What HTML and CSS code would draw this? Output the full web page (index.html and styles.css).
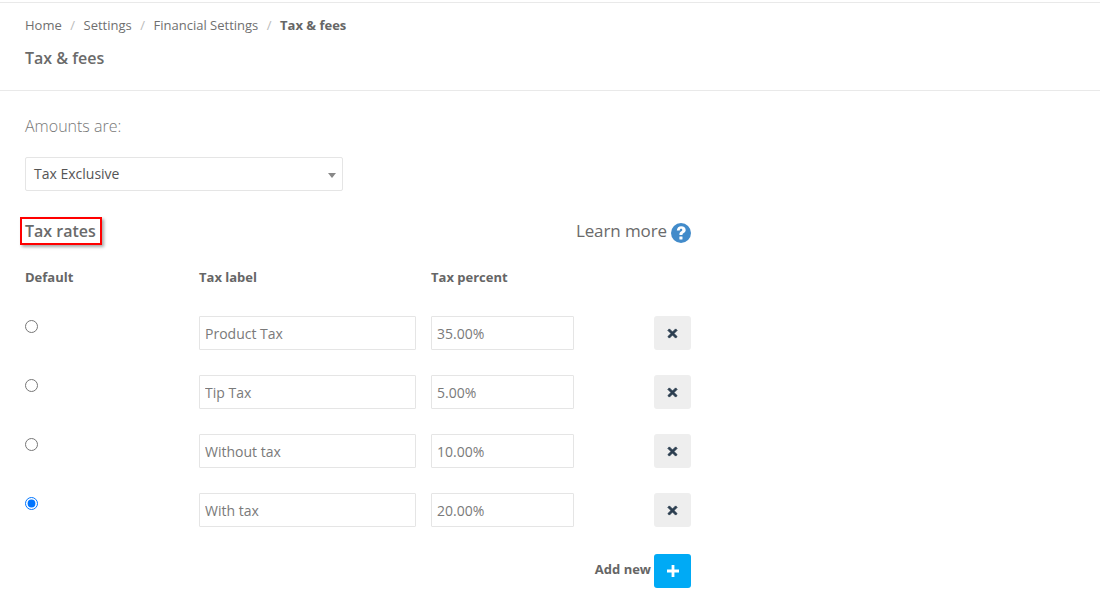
FILE: index.html
```html
<!DOCTYPE html>
<html lang="en">
<head>
<meta charset="utf-8">
<title>Tax &amp; fees</title>
<link rel="stylesheet" href="styles.css">
</head>
<body>
<header class="page-header">
  <nav class="crumbs">
    <a>Home</a><span class="sep">/</span><a>Settings</a><span class="sep">/</span><a>Financial Settings</a><span class="sep">/</span><strong>Tax &amp; fees</strong>
  </nav>
  <h1 class="page-title">Tax &amp; fees</h1>
</header>
<main class="content">
  <p class="amounts-label">Amounts are:</p>
  <div class="select-box">
    <span class="select-text">Tax Exclusive</span>
    <i class="caret"></i>
  </div>
  <div class="rates-head">
    <h2 class="rates-title">Tax rates</h2>
    <a class="learn"><span class="learn-text">Learn more</span>
      <svg class="help" viewBox="0 0 20 20" width="20" height="20" aria-hidden="true"><circle cx="10" cy="10" r="10" fill="#428bca"/><path d="M5.800 7.500C6 4.800 7.800 3.300 10.300 3.300c2.600 0 4.400 1.500 4.400 3.600 0 1.500-.8 2.400-2 3.200-.9.600-1.200.9-1.200 1.600v.4H8.400v-.7c0-1.400.5-2.200 1.600-3 .9-.6 1.300-1 1.300-1.500 0-.7-.5-1.100-1.200-1.100-.8 0-1.300.5-1.400 1.700z" fill="#fff"/><rect x="8.400" y="13.400" width="3.100" height="3" rx=".3" fill="#fff"/></svg>
    </a>
  </div>
  <div class="rates">
    <div class="th first">Default</div><div class="th">Tax label</div><div class="th">Tax percent</div><div class="th"></div>

    <div class="cell-radio"><input type="radio" name="def"></div>
    <input class="field" type="text" value="Product Tax">
    <input class="field" type="text" value="35.00%">
    <button class="btn del"><svg viewBox="0 0 12 12" width="11" height="11"><path d="M2.600 1 6 4.400 9.400 1 11 2.600 7.600 6 11 9.400 9.400 11 6 7.600 2.600 11 1 9.400 4.400 6 1 2.600z" fill="#2c3e50" stroke="#2c3e50" stroke-width="1" stroke-linejoin="round"/></svg></button>

    <div class="cell-radio"><input type="radio" name="def"></div>
    <input class="field" type="text" value="Tip Tax">
    <input class="field" type="text" value="5.00%">
    <button class="btn del"><svg viewBox="0 0 12 12" width="11" height="11"><path d="M2.600 1 6 4.400 9.400 1 11 2.600 7.600 6 11 9.400 9.400 11 6 7.600 2.600 11 1 9.400 4.400 6 1 2.600z" fill="#2c3e50" stroke="#2c3e50" stroke-width="1" stroke-linejoin="round"/></svg></button>

    <div class="cell-radio"><input type="radio" name="def"></div>
    <input class="field" type="text" value="Without tax">
    <input class="field" type="text" value="10.00%">
    <button class="btn del"><svg viewBox="0 0 12 12" width="11" height="11"><path d="M2.600 1 6 4.400 9.400 1 11 2.600 7.600 6 11 9.400 9.400 11 6 7.600 2.600 11 1 9.400 4.400 6 1 2.600z" fill="#2c3e50" stroke="#2c3e50" stroke-width="1" stroke-linejoin="round"/></svg></button>

    <div class="cell-radio"><input type="radio" name="def" checked></div>
    <input class="field" type="text" value="With tax">
    <input class="field" type="text" value="20.00%">
    <button class="btn del"><svg viewBox="0 0 12 12" width="11" height="11"><path d="M2.600 1 6 4.400 9.400 1 11 2.600 7.600 6 11 9.400 9.400 11 6 7.600 2.600 11 1 9.400 4.400 6 1 2.600z" fill="#2c3e50" stroke="#2c3e50" stroke-width="1" stroke-linejoin="round"/></svg></button>
  </div>
  <div class="add-row">
    <span class="add-label">Add new</span>
    <button class="btn add"><svg viewBox="0 0 12 12" width="12" height="12"><path d="M4.600 0h2.800v4.600H12v2.800H7.400V12H4.600V7.400H0V4.600h4.600z" fill="#fff"/></svg></button>
  </div>
</main>
</body>
</html>
```
FILE: styles.css
```css
* { box-sizing: border-box; }
html, body { margin: 0; height: 100%; overflow: hidden; }
body {
  background: #fff;
  color: #666;
  font-family: "Open Sans", "Liberation Sans", sans-serif;
  font-size: 14px;
}
.page-header {
  margin-top: 2px;
  height: 89px;
  border-top: 1px solid #e9e9e9;
  border-bottom: 1px solid #e9e9e9;
  padding: 13px 25px 0;
}
.crumbs { font-size: 13px; line-height: 18px; color: #6f6f6f; display: flex; }
.crumbs a { color: #6f6f6f; }
.crumbs strong { font-weight: 700; color: #666; }
.sep { color: #bbb; margin: 0 8.500px; }
.page-title {
  margin: 13px 0 0;
  font-size: 16px;
  line-height: 22px;
  font-weight: 600;
  color: #6a6a6a;
}
.content { padding: 0 25px; width: 716px; }
.amounts-label {
  margin: 25px 0 0;
  font-size: 16px;
  line-height: 21px;
  font-weight: 300;
  color: #777;
}
.select-box {
  margin-top: 20px;
  width: 318px;
  height: 34px;
  border: 1px solid #e5e5e5;
  border-radius: 2px;
  display: flex;
  align-items: center;
  justify-content: space-between;
  padding: 0 6px 0 8px;
  color: #555;
  font-size: 14px;
}
.select-text { position: relative; top: -1px; }
.caret {
  width: 0; height: 0;
  border-left: 4px solid transparent;
  border-right: 4px solid transparent;
  border-top: 5px solid #888;
  margin-top: 2px;
}
.rates-head {
  margin-top: 27px;
  height: 28px;
  display: flex;
  align-items: center;
  justify-content: space-between;
}
.rates-title {
  margin: 0 0 2px;
  font-size: 16px;
  font-weight: 600;
  line-height: 22px;
  color: #6a6a6a;
  position: relative;
}
.rates-title::after {
  content: "";
  position: absolute;
  left: -5px; right: -6px; top: -3px; bottom: -3px;
  border: 2px solid #f00;
  box-shadow: 2px 2px 3px rgba(0,0,0,.35);
}
.learn {
  display: flex;
  align-items: center;
  gap: 4px;
  font-size: 17px;
  line-height: 24px;
  color: #6a6a6a;
}
.learn-text { margin-bottom: 2px; letter-spacing: -.1px; }
.help { margin-top: 2px; }
.rates {
  margin-top: 22px;
  display: grid;
  grid-template-columns: 174px 217px 143px 1fr;
  column-gap: 0;
  row-gap: 25px;
  align-items: start;
}
.th {
  font-size: 13px;
  font-weight: 700;
  line-height: 18px;
  color: #666;
  height: 18px;
  margin-bottom: 5px;
}
.th:nth-child(3) { margin-left: 15px; }
.cell-radio { height: 34px; }
.cell-radio input {
  margin: 4px 0 0;
  width: 13px;
  height: 13px;
  display: block;
}
.field {
  height: 34px;
  width: 100%;
  border: 1px solid #e5e5e5;
  border-radius: 1px;
  padding: 0 5px;
  font: 14px "Open Sans", "Liberation Sans", sans-serif;
  color: #7a7a7a;
  background: #fff;
  outline: none;
}
.field:nth-child(4n+3) { margin-left: 15px; width: 143px; }
.btn {
  width: 37px;
  height: 34px;
  border: 0;
  border-radius: 3px;
  padding: 0;
  display: flex;
  align-items: center;
  justify-content: center;
}
.del { background: #eee; justify-self: end; }
.add { background: #00aaf5; }
.add-row {
  margin-top: 27px;
  display: flex;
  align-items: center;
  justify-content: flex-end;
  gap: 3px;
}
.add-label { font-size: 13px; font-weight: 700; color: #666; margin-bottom: 4px; }
```
